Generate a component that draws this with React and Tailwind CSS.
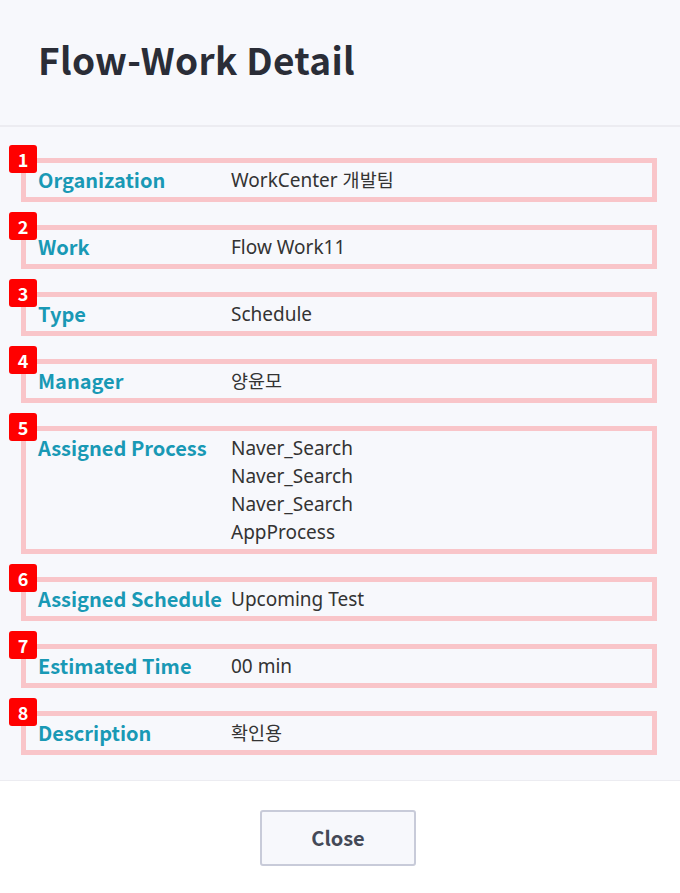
import React from "react";

// Detail rows shown in the modal body
const rows = [
  { no: 1, label: "Organization", values: ["WorkCenter 개발팀"] },
  { no: 2, label: "Work", values: ["Flow Work11"] },
  { no: 3, label: "Type", values: ["Schedule"] },
  { no: 4, label: "Manager", values: ["양윤모"] },
  {
    no: 5,
    label: "Assigned Process",
    values: ["Naver_Search", "Naver_Search", "Naver_Search", "AppProcess"],
  },
  { no: 6, label: "Assigned Schedule", values: ["Upcoming Test"] },
  { no: 7, label: "Estimated Time", values: ["00 min"] },
  { no: 8, label: "Description", values: ["확인용"] },
];

// Korean runs use the CJK face at a slightly smaller size
function Value({ text }) {
  const parts = text.split(/([가-힣]+)/);
  return (
    <span className="block h-[28px]">
      {parts.map((p, i) =>
        /[가-힣]/.test(p) ? (
          <span key={i} className="text-[18.5px] leading-none" style={{ fontFamily: '"Noto Sans CJK KR", sans-serif' }}>
            {p}
          </span>
        ) : (
          <span key={i}>{p}</span>
        )
      )}
    </span>
  );
}

function DetailRow({ row }) {
  return (
    <div className="relative flex border-[5px] border-[#f9c5c9] py-[3px] pl-[12px] pr-3">
      {/* Number badge */}
      <span className="absolute left-[-17px] top-[-18px] flex h-[28px] w-[28px] items-center justify-center rounded-[3px] bg-[#ff0000] text-[18px] font-bold leading-none text-white">
        {row.no}
      </span>
      <div className="w-[193px] shrink-0 text-[20px] font-bold leading-[28px] text-[#1999b5]">
        {row.label}
      </div>
      <div
        className="flex flex-col text-[19px] leading-[28px] text-[#333333]"
        style={{ fontFamily: '"Noto Sans", "Noto Sans CJK KR", sans-serif' }}
      >
        {row.values.map((v, i) => (
          <Value key={i} text={v} />
        ))}
      </div>
    </div>
  );
}

export default function App() {
  return (
    <div
      className="flex h-[893px] w-[680px] flex-col bg-white"
      style={{ fontFamily: '"Noto Sans CJK KR", "Noto Sans", sans-serif' }}
    >
      {/* Header */}
      <div className="flex h-[127px] shrink-0 items-center border-b-2 border-[#ececf1] bg-[#f7f8fc] pl-[38px]">
        <h1 className="mt-[-6px] text-[37px] font-bold tracking-[0.3px] text-[#2a2d37]">
          Flow-Work Detail
        </h1>
      </div>

      {/* Body */}
      <div className="flex h-[654px] shrink-0 flex-col gap-[23px] border-b border-[#ececf1] bg-[#f7f8fc] pl-[21px] pr-[23px] pt-[31px]">
        {rows.map((row) => (
          <DetailRow key={row.no} row={row} />
        ))}
      </div>

      {/* Footer */}
      <div className="flex flex-1 items-start justify-center pr-[4px] pt-[29px]">
        <button className="h-[56px] w-[156px] rounded-[3px] border-2 border-[#c8cbd9] bg-[#f7f8fc] text-[20px] font-bold text-[#444957]">
          Close
        </button>
      </div>
    </div>
  );
}
